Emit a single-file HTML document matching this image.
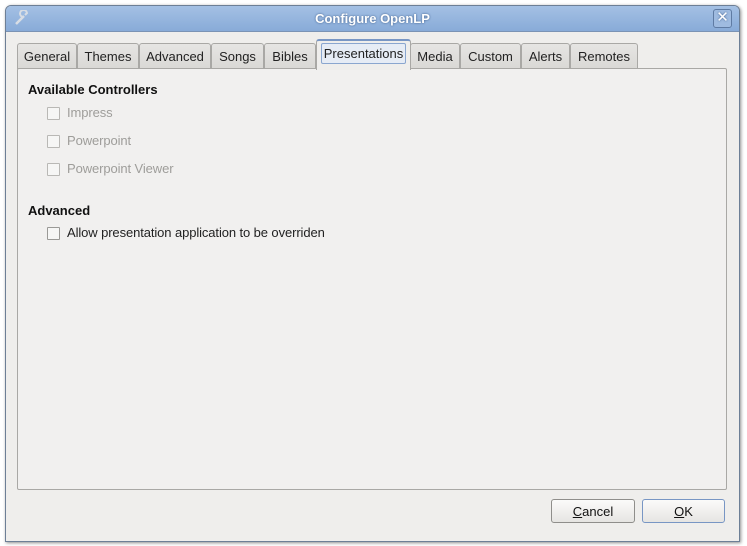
<!DOCTYPE html>
<html><head><style>
body{margin:0;width:747px;height:546px;background:#fff;font-family:"Liberation Sans","DejaVu Sans",sans-serif;font-size:13px;position:relative;overflow:hidden}
.win{position:absolute;left:5px;top:5px;width:733px;height:535px;background:#efeeec;border:1px solid #6d7f96;border-radius:6px 6px 0 0;box-shadow:1px 1px 3px rgba(0,0,0,.45);overflow:hidden}
.title{position:absolute;left:0;top:0;right:0;height:25px;background:linear-gradient(#a4c0e4,#88abd8);border-bottom:1px solid #7b93b4;color:#fff;font-weight:bold;text-align:center;line-height:25px;font-size:13px;text-shadow:0 0 2px #3a5a88}
.x{position:absolute;right:7px;top:3px;width:17px;height:17px;border:1px solid #5f7ba3;border-radius:3px;background:#9fbbe0;color:#fff;font-size:15px;line-height:16px;text-align:center;font-weight:normal}
.tab{position:absolute;top:37px;height:26px;background:linear-gradient(#e6e5e3,#d9d8d5);border:1px solid #a9a8a5;border-bottom:none;border-radius:3px 3px 0 0;line-height:25px;text-align:center;color:#222;box-sizing:border-box}
.tab.sel{top:33px;height:31px;background:#efeeec;border-top:2px solid #7896c4;z-index:2}
.tab.sel span{display:inline-block;border:1px solid #8aa6cf;background:#e6ecf5;border-radius:2px;line-height:19px;padding:0 2px;margin-top:2px}
.panel{position:absolute;left:11px;top:62px;width:710px;height:422px;border:1px solid #a9a8a5;border-radius:2px;background:#f1f0ef;box-sizing:border-box}
.h{position:absolute;font-weight:bold;color:#111}
.cb{position:absolute;width:11px;height:11px;border:1px solid #9a9996;background:#f6f6f5;border-radius:1px}
.cb.d{border-color:#b9b8b5}
.lbl{position:absolute;color:#222;letter-spacing:-0.1px}
.lbl.d{color:#9e9d9a}
.btn{position:absolute;top:493px;height:24px;border:1px solid #8f8e8b;border-radius:3px;background:linear-gradient(#fbfbfa,#e6e5e2);text-align:center;line-height:23px;color:#111;box-sizing:border-box}
</style></head><body>
<div class="win">
<div class="title">Configure OpenLP<div class="x">✕</div>
<svg style="position:absolute;left:8px;top:4px" width="16" height="16"><path d="M2 14 L10 6" stroke="#d8dde4" stroke-width="2.5"/><path d="M9 7 A3.5 3.5 0 1 1 13 3 L11 5" stroke="#d8dde4" stroke-width="2" fill="none"/></svg></div>
<div class="tab" style="left:11px;width:60px">General</div>
<div class="tab" style="left:71px;width:62px">Themes</div>
<div class="tab" style="left:133px;width:72px">Advanced</div>
<div class="tab" style="left:205px;width:53px">Songs</div>
<div class="tab" style="left:258px;width:52px">Bibles</div>
<div class="tab sel" style="left:310px;width:95px"><span>Presentations</span></div>
<div class="tab" style="left:404px;width:50px">Media</div>
<div class="tab" style="left:454px;width:61px">Custom</div>
<div class="tab" style="left:515px;width:49px">Alerts</div>
<div class="tab" style="left:564px;width:68px">Remotes</div>
<div class="panel"></div>
<div class="h" style="left:22px;top:76px">Available Controllers</div>
<div class="cb d" style="left:41px;top:101px"></div><div class="lbl d" style="left:61px;top:99px">Impress</div>
<div class="cb d" style="left:41px;top:129px"></div><div class="lbl d" style="left:61px;top:127px">Powerpoint</div>
<div class="cb d" style="left:41px;top:157px"></div><div class="lbl d" style="left:61px;top:155px">Powerpoint Viewer</div>
<div class="h" style="left:22px;top:197px">Advanced</div>
<div class="cb" style="left:41px;top:221px"></div><div class="lbl" style="left:61px;top:219px">Allow presentation application to be overriden</div>
<div class="btn" style="left:545px;width:84px"><u>C</u>ancel</div>
<div class="btn" style="left:636px;width:83px;border-color:#7896c4"><u>O</u>K</div>
</div>
</body></html>
